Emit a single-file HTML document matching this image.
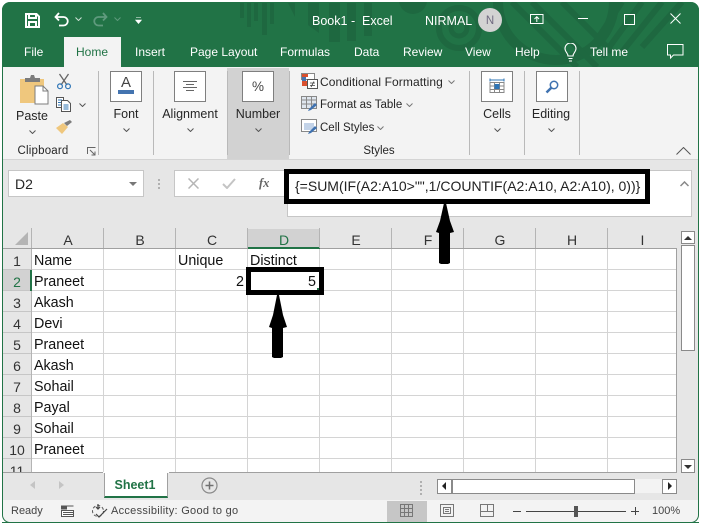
<!DOCTYPE html>
<html><head><meta charset="utf-8">
<style>
html,body{margin:0;padding:0;background:#fff}
#w{position:relative;width:702px;height:526px;overflow:hidden;background:#fff;font-family:"Liberation Sans",sans-serif;color:#262626}
#w div,#w svg{position:absolute}
.t{white-space:nowrap;line-height:16px;font-size:12.5px}
.c{transform:translateX(-50%)}
.tab{color:#fff;top:44px;font-size:12px}
.lb{top:106px;color:#262626;font-size:12.5px}
.hd{top:232px;width:72px;text-align:center;font-size:14px;line-height:17px;color:#333}
.rn{left:3px;width:28px;text-align:center;font-size:14px;line-height:21px;color:#333;margin-top:2px}
.cell{font-size:14.3px;line-height:21px;color:#111;white-space:nowrap;margin-top:2px}
.box{background:#fff;border:1px solid #7f7f7f;box-sizing:border-box}
.sty{left:320px;font-size:12px;letter-spacing:.1px}
</style></head><body><div id="w">
<!-- window -->
<div style="left:2px;top:2px;width:697px;height:521px;background:#e6e6e6;border:1px solid #217346;border-top:0;box-sizing:border-box;border-radius:8px"></div>
<div style="left:2px;top:2px;width:697px;height:65px;background:#217346;border-radius:8px 8px 0 0;overflow:hidden">
<svg width="697" height="65" style="left:0;top:0"><g fill="#1e6840">
<rect x="238" y="1" width="4" height="15"/><rect x="245" y="1" width="4" height="24"/><rect x="252" y="1" width="4" height="18"/><rect x="260" y="1" width="5" height="32"/><rect x="268" y="1" width="4" height="21"/>
<path d="M286 1h7v14zM306 1h11v30l-11-8zM327 1h11v39h-11zM345 1h9v38h-9zM362 1h8v33h-8z"/></g>
<g fill="none" stroke="#1e6840"><circle cx="457" cy="26" r="20" stroke-width="6"/><circle cx="457" cy="26" r="8" stroke-width="5"/><circle cx="411" cy="-2" r="14" stroke-width="0" fill="#1e6840"/><circle cx="554" cy="0" r="58" stroke-width="10"/>
<path d="M510 0L575 65M530 0L595 65M560 0L610 50M620 0L590 45M640 0L600 55M660 0L620 50M680 0L640 45" stroke-width="6"/></g></svg>
</div>
<!-- qat -->
<svg width="15" height="15" style="left:25px;top:13px"><path d="M1 1h10.500l2.500 2.500V14H1z M4 1v4h7V1 M4 14V9h7v5" fill="none" stroke="#fff" stroke-width="2"/></svg>
<svg width="16" height="15" style="left:54px;top:12px"><path d="M5 1L1.500 5 5 8.500M2 5h7.500a3.500 3.500 0 0 1 0 8.500H5" fill="none" stroke="#fff" stroke-width="1.800"/></svg>
<svg width="7" height="4" style="left:75px;top:17px"><path d="M.5.500l3 3 3-3" fill="none" stroke="#cfe0d6"/></svg>
<svg width="16" height="15" style="left:92px;top:12px"><path d="M11 1l3.500 4L11 8.500M14 5H6.500a3.500 3.500 0 0 0 0 8.500H11" fill="none" stroke="#5f9a7d" stroke-width="1.800"/></svg>
<svg width="7" height="4" style="left:114px;top:17px"><path d="M.5.500l3 3 3-3" fill="none" stroke="#5f9a7d"/></svg>
<svg width="7" height="8" style="left:135px;top:17px"><path d="M1 .5h5M.5 3h6L3.500 6.500z" fill="#fff" stroke="#fff" stroke-width=".6"/></svg>
<!-- title -->
<div class="t" style="left:312px;top:13px;color:#fff;font-size:12.500px">Book1</div>
<div class="t" style="left:351px;top:13px;color:#fff">-</div>
<div class="t" style="left:362px;top:13px;color:#fff;font-size:12.500px">Excel</div>
<div class="t" style="left:425px;top:13px;color:#fff;font-size:12.500px">NIRMAL</div>
<div style="left:478px;top:8px;width:24px;height:24px;border-radius:50%;background:#d3d3d3"></div>
<div class="t c" style="left:490px;top:13px;color:#706a80;font-size:11.500px">N</div>
<svg width="14" height="12" style="left:530px;top:13px"><path d="M.5 1.500h12.500v9H.5zM.5 1.500h12.500" fill="none" stroke="#fff"/><path d="M6.800 9V4M4.500 6l2.300-2.300L9 6" fill="none" stroke="#fff"/></svg>
<div style="left:578px;top:18px;width:10px;height:1px;background:#fff"></div>
<div style="left:624px;top:14px;width:9px;height:9px;border:1px solid #fff"></div>
<svg width="11" height="11" style="left:670px;top:13px"><path d="M.5.500l10 10M10.500.500l-10 10" stroke="#fff" fill="none"/></svg>
<!-- tabs -->
<div style="left:64px;top:37px;width:57px;height:30px;background:#f3f3f3"></div>
<div class="t tab" style="left:24px">File</div>
<div class="t" style="left:76px;top:44px;color:#217346;font-size:12px">Home</div>
<div class="t tab" style="left:135px">Insert</div>
<div class="t tab" style="left:190px">Page Layout</div>
<div class="t tab" style="left:280px">Formulas</div>
<div class="t tab" style="left:354px">Data</div>
<div class="t tab" style="left:403px">Review</div>
<div class="t tab" style="left:465px">View</div>
<div class="t tab" style="left:515px">Help</div>
<svg width="13" height="19" style="left:564px;top:43px"><path d="M4 13c0-3-3-4-3-7.500a5.500 5.500 0 0 1 11 0C12 9 9 10 9 13zM4.500 15.500h4M5 18h3" fill="none" stroke="#fff" stroke-width="1.100"/></svg>
<div class="t tab" style="left:590px">Tell me</div>
<svg width="18" height="16" style="left:667px;top:44px"><path d="M.5.500h15.500v10.500H6.500l-3 3v-3H.5z" fill="none" stroke="#fff"/></svg>
<!-- ribbon -->
<div style="left:3px;top:67px;width:695px;height:92px;background:#f3f3f3;border-bottom:1px solid #d4d4d4"></div>
<div style="left:227px;top:68px;width:62px;height:91px;background:#d2d2d2"></div>
<div style="left:98px;top:71px;width:1px;height:84px;background:#b9b9b9"></div>
<div style="left:153px;top:71px;width:1px;height:84px;background:#b9b9b9"></div>
<div style="left:227px;top:71px;width:1px;height:84px;background:#b9b9b9"></div>
<div style="left:289px;top:71px;width:1px;height:84px;background:#b9b9b9"></div>
<div style="left:469px;top:71px;width:1px;height:84px;background:#b9b9b9"></div>
<div style="left:524px;top:71px;width:1px;height:84px;background:#b9b9b9"></div>
<div style="left:579px;top:71px;width:1px;height:84px;background:#b9b9b9"></div>
<!-- paste -->
<svg width="30" height="31" style="left:19px;top:74px"><path d="M1 5h24v24H1z" fill="#efc77d"/><path d="M6 4h5l1-3h3l1 3h5v4H6z" fill="#7c7c7c"/><path d="M16 12h8l5 5v13H16z" fill="#fff" stroke="#7c7c7c"/><path d="M24 12v5h5" fill="none" stroke="#7c7c7c"/></svg>
<svg width="16" height="17" style="left:56px;top:73px"><path d="M3.500 1l7.500 11M12.500 1L5 12" stroke="#666" stroke-width="1.300" fill="none"/><circle cx="4" cy="13.300" r="2.400" fill="none" stroke="#2e75b6" stroke-width="1.200"/><circle cx="12" cy="13.300" r="2.400" fill="none" stroke="#2e75b6" stroke-width="1.200"/></svg>
<svg width="16" height="15" style="left:56px;top:97px"><path d="M.5.500h7v10h-7z" fill="#fff" stroke="#555"/><path d="M5.500 3.500h6l3 3v8h-9z" fill="#fff" stroke="#555"/><path d="M2 3h4M2 5.500h3M2 8h3M7.500 8h5M7.500 10h5M7.500 12h5" stroke="#2e75b6"/></svg>
<svg width="7" height="4" style="left:79px;top:103px"><path d="M.5.500l3 3 3-3" fill="none" stroke="#555"/></svg>
<svg width="17" height="15" style="left:56px;top:120px"><path d="M0 8l6 6 6-7-5-4z" fill="#efc77d"/><path d="M8 3l3 3 5-4-2-2z" fill="#7c7c7c"/></svg>
<div class="t c lb" style="left:32px;top:108px">Paste</div>
<svg width="7" height="4" style="left:29px;top:130px"><path d="M.5.500l3 3 3-3" fill="none" stroke="#555"/></svg>
<div class="t c" style="left:43px;top:143px;font-size:11.500px;letter-spacing:.2px">Clipboard</div>
<svg width="9" height="9" style="left:87px;top:147px"><path d="M.5 7V.500H8.500M3 3l5 5M8 4.500V8H4.500" fill="none" stroke="#666"/></svg>
<!-- big boxes -->
<div class="box" style="left:110px;top:71px;width:32px;height:31px"></div>
<div class="t c" style="left:126px;top:75px;font-size:15px;line-height:15px;color:#444">A</div>
<div style="left:118px;top:90px;width:16px;height:4px;background:#4474b0"></div>
<div class="box" style="left:174px;top:71px;width:32px;height:31px"></div>
<svg width="14" height="11" style="left:183px;top:81px"><path d="M0 .5h14M3 3.500h8M0 6.500h14M3 9.500h8" stroke="#666"/></svg>
<div class="box" style="left:242px;top:71px;width:32px;height:31px"></div>
<div class="t c" style="left:258px;top:79px;font-size:13.500px;color:#444">%</div>
<div class="box" style="left:481px;top:71px;width:32px;height:31px"></div>
<svg width="16" height="16" style="left:489px;top:78px"><path d="M1 .5v3M15 .5v3M1 2h14" stroke="#2e75b6"/><path d="M1 4.500h14v10H1zM1 8h14M1 11.500h14M5.500 4.500v10M10.500 4.500v10" stroke="#888" fill="#fff"/><rect x="5.500" y="6" width="5" height="5" fill="#2e75b6"/></svg>
<div class="box" style="left:536px;top:71px;width:32px;height:31px"></div>
<svg width="14" height="14" style="left:545px;top:80px"><circle cx="9" cy="5" r="3.700" fill="none" stroke="#3f72b0" stroke-width="1.500"/><path d="M6.300 7.700L1.500 12.500" stroke="#3f72b0" stroke-width="2.500"/></svg>
<div class="t c lb" style="left:126px">Font</div>
<div class="t c lb" style="left:190px">Alignment</div>
<div class="t c lb" style="left:258px">Number</div>
<div class="t c lb" style="left:497px">Cells</div>
<div class="t c lb" style="left:551px">Editing</div>
<svg width="7" height="4" style="left:123px;top:128px"><path d="M.5.500l3 3 3-3" fill="none" stroke="#555"/></svg>
<svg width="7" height="4" style="left:187px;top:128px"><path d="M.5.500l3 3 3-3" fill="none" stroke="#555"/></svg>
<svg width="7" height="4" style="left:255px;top:128px"><path d="M.5.500l3 3 3-3" fill="none" stroke="#555"/></svg>
<svg width="7" height="4" style="left:494px;top:128px"><path d="M.5.500l3 3 3-3" fill="none" stroke="#555"/></svg>
<svg width="7" height="4" style="left:548px;top:128px"><path d="M.5.500l3 3 3-3" fill="none" stroke="#555"/></svg>
<!-- styles -->
<svg width="17" height="16" style="left:301px;top:73px"><path d="M.5.500h13v6h-13z" fill="#fff" stroke="#888"/><rect x="1" y="1" width="6" height="3" fill="#d9502e"/><rect x="1" y="4" width="4" height="4" fill="#4474b0"/><rect x="1" y="8" width="5" height="5" fill="#d9502e"/><path d="M6.500 6.500h10v9h-10z" fill="#fff" stroke="#555"/><path d="M9 10h5M9 12.500h5M13 8.500l-3 5.500" stroke="#444" stroke-width=".8"/></svg>
<svg width="17" height="16" style="left:301px;top:96px"><path d="M.5.500h15v12H.5zM.5 4h15M.5 8h15M5.500.500v12M10.500.500v12" fill="#dfe6ee" stroke="#888"/><path d="M8 13l6-6 2 2-6 5-3 1z" fill="#3f72b0"/></svg>
<svg width="17" height="16" style="left:301px;top:119px"><path d="M.5.500h15v12H.5z" fill="#fff" stroke="#888"/><rect x="3" y="4" width="10" height="7" fill="#c3d3e8"/><path d="M8 13l6-6 2 2-6 5-3 1z" fill="#3f72b0"/></svg>
<div class="t sty" style="top:74px">Conditional Formatting</div>
<svg width="7" height="4" style="left:448px;top:80px"><path d="M.5.500l3 3 3-3" fill="none" stroke="#777"/></svg>
<div class="t sty" style="top:97px;font-size:11.5px;letter-spacing:0">Format as Table</div>
<svg width="7" height="4" style="left:406px;top:103px"><path d="M.5.500l3 3 3-3" fill="none" stroke="#777"/></svg>
<div class="t sty" style="top:120px;font-size:11.5px;letter-spacing:0">Cell Styles</div>
<svg width="7" height="4" style="left:377px;top:126px"><path d="M.5.500l3 3 3-3" fill="none" stroke="#777"/></svg>
<div class="t c" style="left:379px;top:143px;font-size:11.500px">Styles</div>
<svg width="15" height="8" style="left:676px;top:147px"><path d="M.5 7.500L7.500.500l7 7" fill="none" stroke="#555"/></svg>
<!-- formula bar -->
<div style="left:8px;top:170px;width:136px;height:27px;background:#fff;border:1px solid #c6c6c6;box-sizing:border-box"></div>
<div class="t" style="left:15px;top:176px;font-size:14px">D2</div>
<svg width="8" height="4" style="left:129px;top:182px"><path d="M0 0h8L4 4z" fill="#777"/></svg>
<div style="left:158px;top:179px;width:2px;height:2px;background:#b0b0b0;box-shadow:0 4px #b0b0b0,0 8px #b0b0b0"></div>
<div style="left:174px;top:170px;width:112px;height:27px;background:#fff;border:1px solid #c6c6c6;box-sizing:border-box"></div>
<svg width="11" height="11" style="left:188px;top:178px"><path d="M.5.500l10 10M10.500.500l-10 10" stroke="#b5b5b5" stroke-width="1.500"/></svg>
<svg width="14" height="11" style="left:222px;top:178px"><path d="M1 6l4 4 8-9" fill="none" stroke="#c4c4c4" stroke-width="2"/></svg>
<div class="t" style="left:259px;top:175px;font-family:'Liberation Serif',serif;font-style:italic;font-weight:bold;font-size:12.500px;color:#666">fx</div>
<div style="left:287px;top:170px;width:405px;height:47px;background:#fff;border:1px solid #c6c6c6;box-sizing:border-box"></div>
<svg width="9" height="6" style="left:680px;top:181px"><path d="M.5 5L4.500 1 8.500 5" fill="none" stroke="#888" stroke-width="1.500"/></svg>
<div style="left:284px;top:169px;width:366px;height:35px;border:5px solid #000;box-sizing:border-box;background:#fff"></div>
<div class="t" style="left:295px;top:178px;font-size:14px;color:#222">{=SUM(IF(A2:A10&gt;"",1/COUNTIF(A2:A10, A2:A10), 0))}</div>
<!-- headers -->
<div style="left:3px;top:228px;width:674px;height:21px;background:#e6e6e6"></div>
<div style="left:248px;top:229px;width:72px;height:19px;background:#d2d2d2"></div>
<div style="left:3px;top:248px;width:674px;height:1px;background:#a0a0a0"></div>
<div style="left:248px;top:247px;width:72px;height:2px;background:#217346"></div>
<svg width="14" height="14" style="left:15px;top:232px"><path d="M13 0v13H0z" fill="#b4b4b4"/></svg>
<div style="left:31px;top:228px;width:646px;height:20px;background:repeating-linear-gradient(90deg,#b4b4b4 0 1px,transparent 1px 72px)"></div>
<div class="hd" style="left:32px">A</div><div class="hd" style="left:104px">B</div><div class="hd" style="left:176px">C</div><div class="hd" style="left:248px;color:#217346">D</div><div class="hd" style="left:320px">E</div><div class="hd" style="left:392px">F</div><div class="hd" style="left:464px">G</div><div class="hd" style="left:536px">H</div><div class="hd" style="left:608px;width:69px">I</div>
<!-- row headers -->
<div style="left:3px;top:249px;width:28px;height:223px;background:repeating-linear-gradient(180deg,#e6e6e6 0 20px,#c6c6c6 20px 21px)"></div>
<div style="left:3px;top:270px;width:28px;height:20px;background:#d2d2d2"></div>
<div style="left:31px;top:249px;width:1px;height:223px;background:#b4b4b4"></div>
<div style="left:30px;top:270px;width:2px;height:21px;background:#217346"></div>
<!-- grid -->
<div style="left:32px;top:249px;width:644px;height:223px;background-color:#fff;background-image:repeating-linear-gradient(90deg,transparent 0 71px,#d4d4d4 71px 72px),repeating-linear-gradient(180deg,transparent 0 20px,#d4d4d4 20px 21px)"></div>
<div style="left:676px;top:249px;width:1px;height:223px;background:#a0a0a0"></div>
<div style="left:3px;top:472px;width:674px;height:1px;background:#a0a0a0"></div>
<div class="rn" style="top:249px">1</div><div class="rn" style="top:270px;color:#217346">2</div><div class="rn" style="top:291px">3</div><div class="rn" style="top:312px">4</div><div class="rn" style="top:333px">5</div><div class="rn" style="top:354px">6</div><div class="rn" style="top:375px">7</div><div class="rn" style="top:396px">8</div><div class="rn" style="top:417px">9</div><div class="rn" style="top:438px">10</div>
<div style="left:3px;top:459px;width:28px;height:13px;overflow:hidden"><div class="rn" style="left:0;top:0">11</div></div>
<div class="cell" style="left:34px;top:249px">Name</div>
<div class="cell" style="left:34px;top:270px">Praneet</div>
<div class="cell" style="left:34px;top:291px">Akash</div>
<div class="cell" style="left:34px;top:312px">Devi</div>
<div class="cell" style="left:34px;top:333px">Praneet</div>
<div class="cell" style="left:34px;top:354px">Akash</div>
<div class="cell" style="left:34px;top:375px">Sohail</div>
<div class="cell" style="left:34px;top:396px">Payal</div>
<div class="cell" style="left:34px;top:417px">Sohail</div>
<div class="cell" style="left:34px;top:438px">Praneet</div>
<div class="cell" style="left:178px;top:249px">Unique</div>
<div class="cell" style="left:250px;top:249px">Distinct</div>
<div class="cell" style="left:236px;top:270px">2</div>
<div style="left:246px;top:267px;width:78px;height:28px;border:5px solid #000;box-sizing:border-box;background:#fff"></div>
<div class="cell" style="left:308px;top:270px">5</div>
<div style="left:317px;top:288px;width:2px;height:2px;background:#217346"></div>
<!-- arrows -->
<svg width="702" height="526" style="left:0;top:0"><path d="M444 203h2l4 18 4 11-4 1v30l-2 1h-7l-2-1v-30l-3-1 4-11z" fill="#000"/><path d="M277 295h2l4 20 4 12-4 1v29l-2 1h-7l-2-1v-29l-3-1 4-12z" fill="#000"/></svg>
<!-- scrollbars -->
<div style="left:677px;top:228px;width:21px;height:245px;background:#e6e6e6"></div>
<div style="left:681px;top:231px;width:14px;height:13px;background:#fff;border:1px solid #8a8a8a;box-sizing:border-box"></div>
<svg width="8" height="4" style="left:684px;top:236px"><path d="M4 0l4 4H0z" fill="#333"/></svg>
<div style="left:681px;top:245px;width:14px;height:106px;background:#fff;border:1px solid #8a8a8a;box-sizing:border-box"></div>
<div style="left:681px;top:459px;width:14px;height:14px;background:#fff;border:1px solid #8a8a8a;box-sizing:border-box"></div>
<svg width="8" height="4" style="left:684px;top:465px"><path d="M0 0h8L4 4z" fill="#333"/></svg>
<!-- sheet bar -->
<div style="left:3px;top:473px;width:695px;height:27px;background:#e6e6e6"></div>
<div style="left:104px;top:472px;width:64px;height:26px;background:#fff;border:1px solid #a0a0a0;border-top:0;border-bottom:2px solid #217346;box-sizing:border-box"></div>
<div style="left:103px;top:472px;width:66px;height:1px;background:#fff"></div>
<div class="t c" style="left:135px;top:477px;color:#217346;font-weight:bold;font-size:12.500px">Sheet1</div>
<svg width="5" height="8" style="left:30px;top:481px"><path d="M5 0v8L0 4z" fill="#c4c4c4"/></svg>
<svg width="5" height="8" style="left:59px;top:481px"><path d="M0 0v8l5-4z" fill="#c4c4c4"/></svg>
<svg width="17" height="17" style="left:201px;top:477px"><circle cx="8.500" cy="8.500" r="7.500" fill="none" stroke="#8a8a8a" stroke-width="1.200"/><path d="M4.500 8.500h8M8.500 4.500v8" stroke="#707070" stroke-width="1.500"/></svg>
<div style="left:420px;top:481px;width:2px;height:2px;background:#b0b0b0;box-shadow:0 4px #b0b0b0,0 8px #b0b0b0,0 12px #b0b0b0"></div>
<div style="left:437px;top:479px;width:239px;height:14px;background:#f3f3f3"></div>
<div style="left:437px;top:479px;width:15px;height:15px;background:#fff;border:1px solid #8a8a8a;box-sizing:border-box"></div>
<svg width="4" height="8" style="left:442px;top:482px"><path d="M4 0v8L0 4z" fill="#222"/></svg>
<div style="left:452px;top:479px;width:183px;height:15px;background:#fff;border:1px solid #8a8a8a;box-sizing:border-box"></div>
<div style="left:662px;top:479px;width:15px;height:15px;background:#fff;border:1px solid #8a8a8a;box-sizing:border-box"></div>
<svg width="4" height="8" style="left:668px;top:482px"><path d="M0 0v8l4-4z" fill="#222"/></svg>
<!-- status -->
<div style="left:3px;top:500px;width:695px;height:22px;background:#f3f3f3;border-radius:0 0 8px 8px"></div>
<div style="left:2px;top:522px;width:697px;height:1px;background:#217346"></div>
<div class="t" style="left:11px;top:503px;font-size:11px;color:#444">Ready</div>
<svg width="13" height="13" style="left:61px;top:504px"><path d="M.5 2h5v3h-5z" fill="#555" stroke="#555"/><path d="M.5 6.500h12v6H.5z" fill="#fff" stroke="#555"/><path d="M6 2h6.500M2 8.500h10M2 10.500h10" stroke="#555"/></svg>
<svg width="17" height="15" style="left:91px;top:503px"><circle cx="7" cy="8" r="5.500" fill="none" stroke="#555" stroke-dasharray="3 2"/><path d="M7 1v5M5 4l2 2 2-2M5 11l3 3 8-8" fill="none" stroke="#444" stroke-width="1.200"/></svg>
<div class="t" style="left:111px;top:503px;font-size:11px;color:#444;letter-spacing:.28px">Accessibility: Good to go</div>
<div style="left:387px;top:501px;width:40px;height:21px;background:#c6c6c6"></div>
<svg width="13" height="13" style="left:400px;top:504px"><path d="M.5.500h12v12H.5zM.5 4.500h12M.5 8.500h12M4.500.500v12M8.500.500v12" fill="none" stroke="#777"/></svg>
<svg width="14" height="13" style="left:440px;top:504px"><path d="M.5.500h13v12H.5z" fill="none" stroke="#777"/><path d="M3.500 3.500h7v6h-7zM5 5.500h4M5 7.500h4" fill="none" stroke="#777"/></svg>
<svg width="14" height="13" style="left:480px;top:504px"><path d="M.5.500h13v12H.5zM.5 7.500h7V.500" fill="none" stroke="#777"/><path d="M7.500 .5v7h6" fill="none" stroke="#777"/></svg>
<div style="left:513px;top:511px;width:8px;height:1px;background:#444"></div>
<div style="left:526px;top:511px;width:100px;height:1px;background:#444"></div>
<div style="left:574px;top:506px;width:4px;height:11px;background:#555"></div>
<div style="left:631px;top:511px;width:8px;height:1px;background:#444"></div>
<div style="left:634.500px;top:507px;width:1px;height:8px;background:#444"></div>
<div class="t" style="left:652px;top:503px;font-size:11px;color:#444">100%</div>
</div></body></html>
